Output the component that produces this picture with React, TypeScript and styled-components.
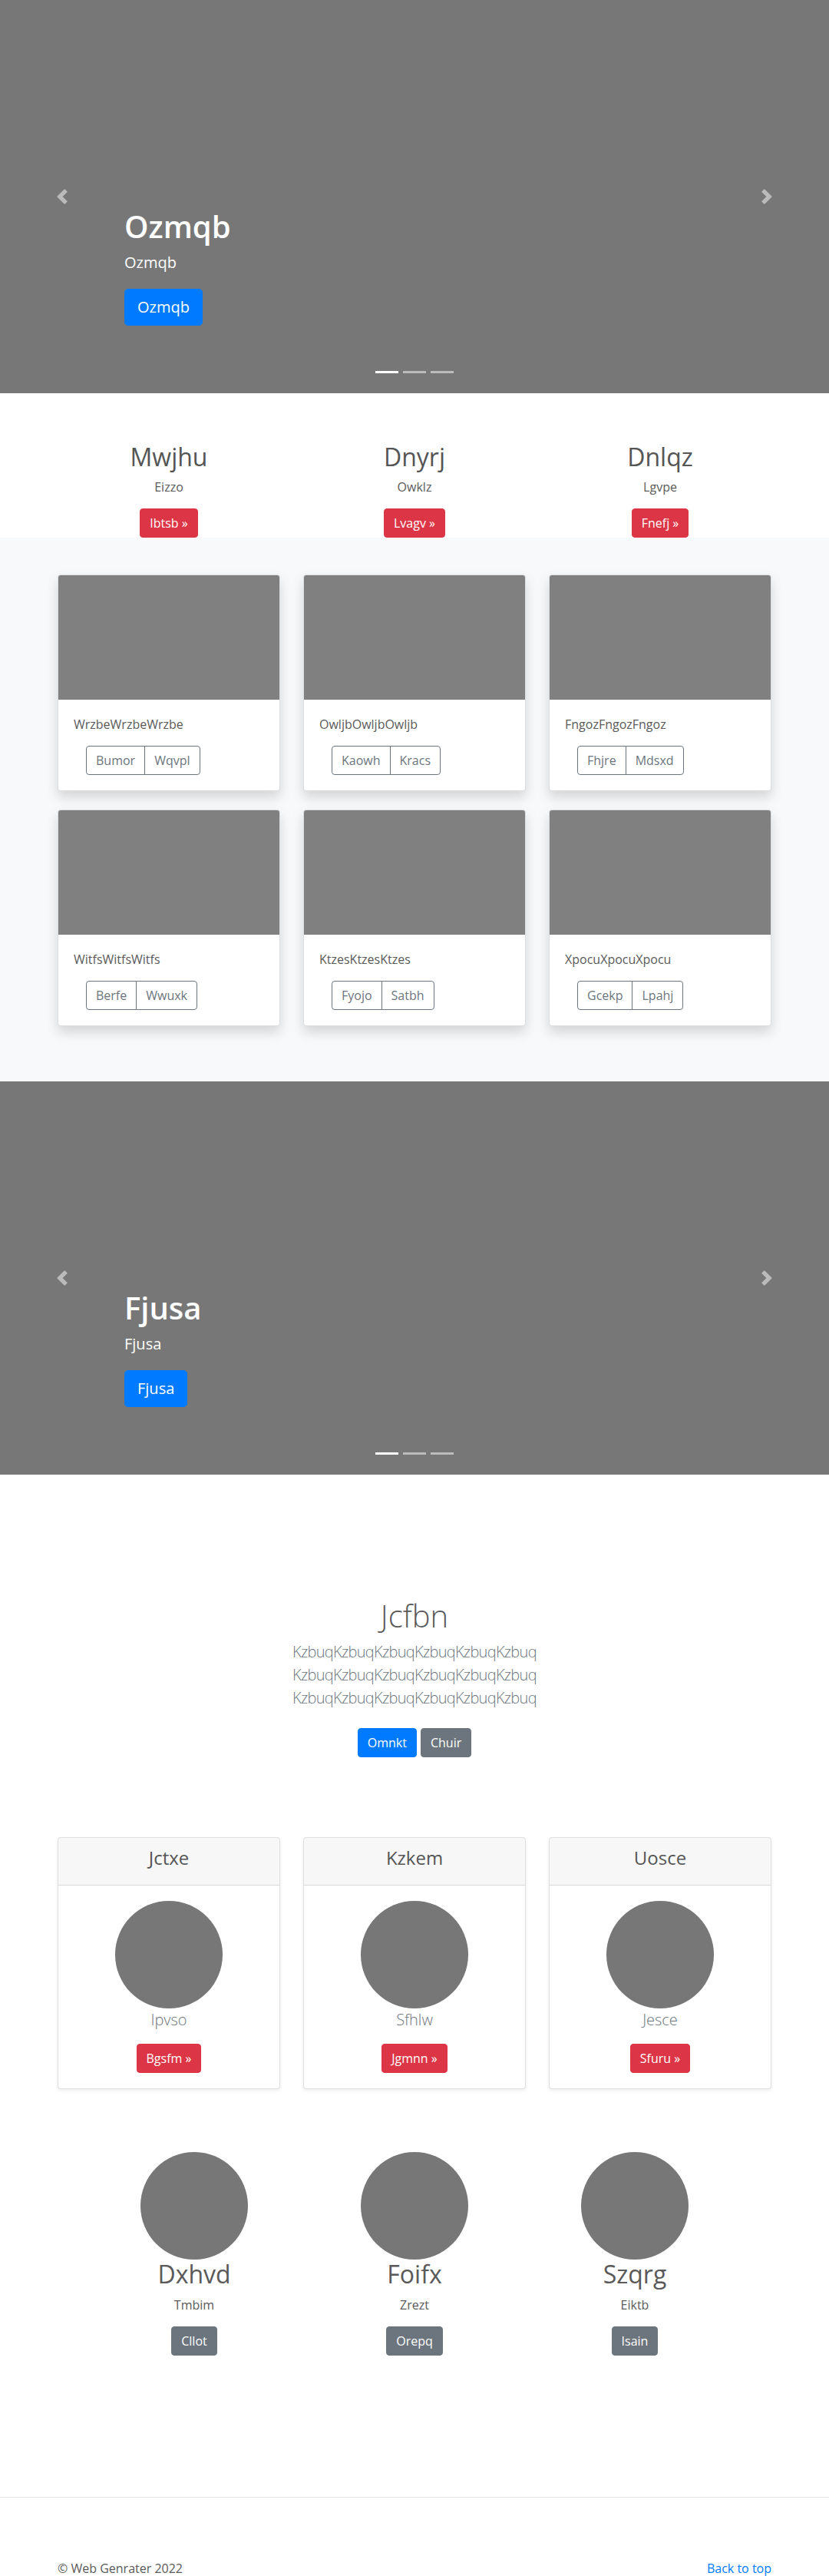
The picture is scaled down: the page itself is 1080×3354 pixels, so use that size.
import React from "react";
import styled, { createGlobalStyle, css } from "styled-components";

const GlobalStyle = createGlobalStyle`
  *, *::before, *::after { box-sizing: border-box; }
  html, body { margin: 0; padding: 0; }
  body {
    font-family: "Segoe UI", "Open Sans", "Liberation Sans", sans-serif;
    font-size: 16px;
    line-height: 1.5;
    color: #5a5a5a;
    background: #fff;
  }
  h1, h2, h3, h4, p { margin: 0; }
`;

type Variant = "primary" | "danger" | "secondary" | "outline";

const variants: Record<Variant, ReturnType<typeof css>> = {
  primary: css`background: #007bff; border-color: #007bff; color: #fff;`,
  danger: css`background: #dc3545; border-color: #dc3545; color: #fff;`,
  secondary: css`background: #6c757d; border-color: #6c757d; color: #fff;`,
  outline: css`background: transparent; border-color: #6c757d; color: #6c757d;`,
};

const Button = styled.button<{ $variant: Variant; $large?: boolean }>`
  display: inline-block;
  font-family: inherit;
  font-weight: 400;
  border: 1px solid transparent;
  cursor: pointer;
  white-space: nowrap;
  ${(p) =>
    p.$large
      ? css`padding: 8px 16px; font-size: 20px; line-height: 30px; border-radius: 4.8px;`
      : css`padding: 6px 12px; font-size: 16px; line-height: 24px; border-radius: 4px;`}
  ${(p) => variants[p.$variant]}
`;

/* ---------- Carousel ---------- */
const Carousel = styled.section`
  position: relative;
  height: 512px;
  background: #777;
  margin-bottom: 64px;
  overflow: hidden;
`;

const Control = styled.a<{ $side: "prev" | "next" }>`
  position: absolute;
  top: 0;
  bottom: 0;
  ${(p) => (p.$side === "prev" ? "left: 0;" : "right: 0;")}
  width: 15%;
  display: flex;
  align-items: center;
  justify-content: center;
  opacity: 0.5;
  svg { width: 20px; height: 20px; display: block; }
`;

const Caption = styled.div`
  position: absolute;
  left: 15%;
  right: 15%;
  bottom: 88px;
  color: #fff;
  display: flex;
  flex-direction: column;
  align-items: flex-start;
`;

const CaptionTitle = styled.h1`
  font-size: 40px;
  font-weight: 600;
  line-height: 48px;
  margin-bottom: 8px;
`;

const CaptionText = styled.p`
  font-size: 20px;
  line-height: 30px;
  margin-bottom: 19px;
`;

const Indicators = styled.ol`
  position: absolute;
  left: 15%;
  right: 15%;
  bottom: 0;
  margin: 0 0 16px;
  padding: 0;
  list-style: none;
  display: flex;
  justify-content: center;
`;

const Indicator = styled.li<{ $active?: boolean }>`
  width: 30px;
  height: 3px;
  margin: 10px 3px;
  background: #fff;
  opacity: ${(p) => (p.$active ? 1 : 0.5)};
`;

const PrevIcon = () => (
  <svg viewBox="0 0 8 8" fill="#fff">
    <path d="M5.25 0l-4 4 4 4 1.5-1.5L4.25 4l2.5-2.5L5.25 0z" />
  </svg>
);
const NextIcon = () => (
  <svg viewBox="0 0 8 8" fill="#fff">
    <path d="M2.75 0l-1.5 1.5L3.75 4l-2.5 2.5L2.75 8l4-4-4-4z" />
  </svg>
);

const Hero = ({ label }: { label: string }) => (
  <Carousel>
    <Control $side="prev"><PrevIcon /></Control>
    <Caption>
      <CaptionTitle>{label}</CaptionTitle>
      <CaptionText>{label}</CaptionText>
      <Button $variant="primary" $large>{label}</Button>
    </Caption>
    <Control $side="next"><NextIcon /></Control>
    <Indicators>
      <Indicator $active />
      <Indicator />
      <Indicator />
    </Indicators>
  </Carousel>
);

/* ---------- Layout helpers ---------- */
const Container = styled.div`
  width: 960px;
  margin: 0 auto;
  padding: 0 15px;
`;

const ThreeCols = styled.div<{ $rowGap?: number }>`
  display: grid;
  grid-template-columns: repeat(3, 1fr);
  column-gap: 30px;
  row-gap: ${(p) => p.$rowGap ?? 0}px;
`;

/* ---------- Marketing ---------- */
const Feature = styled.div`
  text-align: center;
  display: flex;
  flex-direction: column;
  align-items: center;
`;

const FeatureTitle = styled.h2`
  font-size: 32px;
  font-weight: 400;
  line-height: 38.4px;
  margin-bottom: 8px;
  color: #555;
`;

const FeatureText = styled.p`
  margin-bottom: 16px;
`;

/* ---------- Album ---------- */
const Album = styled.section`
  background: #f8f9fa;
  padding: 48px 0 72px;
`;

const AlbumCard = styled.div`
  background: #fff;
  border: 1px solid rgba(0, 0, 0, 0.125);
  border-radius: 4px;
  box-shadow: 0 8px 16px rgba(0, 0, 0, 0.15);
  overflow: hidden;
`;

const CardImage = styled.div`
  height: 162px;
  background: #808080;
`;

const CardBody = styled.div`
  padding: 20px;
`;

const CardText = styled.p`
  margin-bottom: 16px;
`;

const BtnGroup = styled.div`
  display: inline-flex;
  margin-left: 16px;
  ${Button}:first-child { border-top-right-radius: 0; border-bottom-right-radius: 0; }
  ${Button}:last-child { border-top-left-radius: 0; border-bottom-left-radius: 0; margin-left: -1px; }
`;

/* ---------- Jumbotron ---------- */
const Jumbotron = styled.section`
  padding: 96px 0;
  text-align: center;
`;

const JumboInner = styled.div`
  max-width: 640px;
  margin: 0 auto;
  padding: 0 15px;
`;

const JumboTitle = styled.h1`
  font-size: 40px;
  font-weight: 300;
  line-height: 48px;
  margin-bottom: 8px;
`;

const Lead = styled.p<{ $tight?: boolean }>`
  font-size: 20px;
  font-weight: 300;
  line-height: 30px;
  color: #6c757d;
  margin-bottom: 16px;
  letter-spacing: ${(p) => (p.$tight ? "-0.7px" : "0")};
`;

const ButtonRow = styled.div`
  display: flex;
  justify-content: center;
  gap: 5px;
  padding: 8px 0;
`;

/* ---------- Pricing ---------- */
const PriceCard = styled.div`
  background: #fff;
  border: 1px solid rgba(0, 0, 0, 0.125);
  border-radius: 4px;
  box-shadow: 0 2px 4px rgba(0, 0, 0, 0.075);
  overflow: hidden;
  text-align: center;
`;

const PriceHeader = styled.div`
  background: rgba(0, 0, 0, 0.03);
  border-bottom: 1px solid rgba(0, 0, 0, 0.125);
  padding: 12px 20px;
`;

const PriceTitle = styled.h4`
  font-size: 24px;
  font-weight: 400;
  line-height: 28.8px;
  margin-bottom: 8px;
  color: #555;
`;

const PriceBody = styled.div`
  padding: 20px;
  display: flex;
  flex-direction: column;
  align-items: center;
`;

const Circle = styled.div`
  width: 140px;
  height: 140px;
  border-radius: 50%;
  background: #777;
  flex-shrink: 0;
`;

/* ---------- Team ---------- */
const Team = styled.section`
  width: 861px;
  margin: 82px auto 0;
  display: grid;
  grid-template-columns: repeat(3, 1fr);
`;

const Member = styled.div`
  display: flex;
  flex-direction: column;
  align-items: center;
  text-align: center;
`;

const MemberName = styled.h2`
  font-size: 32px;
  font-weight: 400;
  line-height: 38.4px;
  margin-bottom: 8px;
`;

const MemberRole = styled.p`
  margin-bottom: 16px;
`;

/* ---------- Footer ---------- */
const Divider = styled.hr`
  margin: 184px 0 0;
  border: 0;
  border-top: 1px solid rgba(0, 0, 0, 0.1);
  height: 0;
`;

const Footer = styled.footer`
  width: 960px;
  margin: 80px auto 0;
  padding: 0 15px;
  display: flex;
  justify-content: space-between;
  line-height: 24px;
`;

const Link = styled.a`
  color: #007bff;
  text-decoration: none;
`;

const features = [
  { t: "Mwjhu", s: "Eizzo", b: "Ibtsb" },
  { t: "Dnyrj", s: "Owklz", b: "Lvagv" },
  { t: "Dnlqz", s: "Lgvpe", b: "Fnefj" },
];

const albums = [
  { t: "Wrzbe", a: "Bumor", b: "Wqvpl" },
  { t: "Owljb", a: "Kaowh", b: "Kracs" },
  { t: "Fngoz", a: "Fhjre", b: "Mdsxd" },
  { t: "Witfs", a: "Berfe", b: "Wwuxk" },
  { t: "Ktzes", a: "Fyojo", b: "Satbh" },
  { t: "Xpocu", a: "Gcekp", b: "Lpahj" },
];

const prices = [
  { t: "Jctxe", s: "Ipvso", b: "Bgsfm" },
  { t: "Kzkem", s: "Sfhlw", b: "Jgmnn" },
  { t: "Uosce", s: "Jesce", b: "Sfuru" },
];

const members = [
  { t: "Dxhvd", s: "Tmbim", b: "Cllot" },
  { t: "Foifx", s: "Zrezt", b: "Orepq" },
  { t: "Szqrg", s: "Eiktb", b: "Isain" },
];

const lead = "KzbuqKzbuqKzbuqKzbuqKzbuqKzbuq";

export default function App() {
  return (
    <>
      <GlobalStyle />
      <Hero label="Ozmqb" />

      <Container>
        <ThreeCols>
          {features.map((f) => (
            <Feature key={f.t}>
              <FeatureTitle>{f.t}</FeatureTitle>
              <FeatureText>{f.s}</FeatureText>
              <Button $variant="danger">{f.b} &raquo;</Button>
            </Feature>
          ))}
        </ThreeCols>
      </Container>

      <Album>
        <Container>
          <ThreeCols $rowGap={24}>
            {albums.map((c) => (
              <AlbumCard key={c.t}>
                <CardImage />
                <CardBody>
                  <CardText>{c.t + c.t + c.t}</CardText>
                  <BtnGroup>
                    <Button $variant="outline">{c.a}</Button>
                    <Button $variant="outline">{c.b}</Button>
                  </BtnGroup>
                </CardBody>
              </AlbumCard>
            ))}
          </ThreeCols>
        </Container>
      </Album>

      <Hero label="Fjusa" />

      <Jumbotron>
        <JumboInner>
          <JumboTitle>Jcfbn</JumboTitle>
          <Lead $tight>
            {lead} {lead} {lead}
          </Lead>
          <ButtonRow>
            <Button $variant="primary">Omnkt</Button>
            <Button $variant="secondary">Chuir</Button>
          </ButtonRow>
        </JumboInner>
      </Jumbotron>

      <Container>
        <ThreeCols>
          {prices.map((p) => (
            <PriceCard key={p.t}>
              <PriceHeader>
                <PriceTitle>{p.t}</PriceTitle>
              </PriceHeader>
              <PriceBody>
                <Circle />
                <Lead>{p.s}</Lead>
                <Button $variant="danger">{p.b} &raquo;</Button>
              </PriceBody>
            </PriceCard>
          ))}
        </ThreeCols>
      </Container>

      <Team>
        {members.map((m) => (
          <Member key={m.t}>
            <Circle />
            <MemberName>{m.t}</MemberName>
            <MemberRole>{m.s}</MemberRole>
            <Button $variant="secondary">{m.b}</Button>
          </Member>
        ))}
      </Team>

      <Divider />
      <Footer>
        <p>&copy; Web Genrater 2022</p>
        <Link href="#">Back to top</Link>
      </Footer>
    </>
  );
}
